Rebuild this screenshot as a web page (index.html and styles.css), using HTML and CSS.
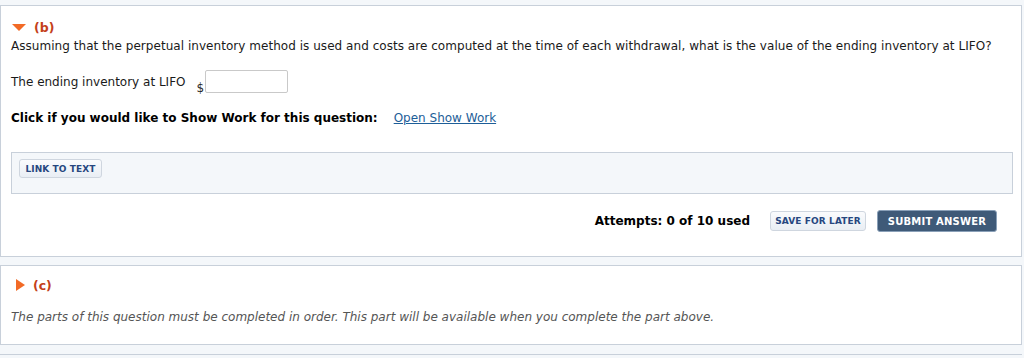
FILE: index.html
```html
<!DOCTYPE html>
<html>
<head>
<meta charset="utf-8">
<link rel="stylesheet" href="styles.css">
</head>
<body>
<div class="page">
  <section class="part">
    <h3 class="part-title"><span class="tri-down"></span>(b)</h3>
    <p class="question">Assuming that the perpetual inventory method is used and costs are computed at the time of each withdrawal, what is the value of the ending inventory at LIFO?</p>
    <div class="answer-row">
      <span class="answer-label">The ending inventory at LIFO</span>
      <span class="dollar">$</span>
      <span class="input"></span>
    </div>
    <div class="showwork">
      <span class="sw-label">Click if you would like to Show Work for this question:</span>
      <a class="sw-link">Open Show Work</a>
    </div>
    <div class="linkbox">
      <span class="btn-light btn-link">LINK TO TEXT</span>
    </div>
    <div class="actions">
      <span class="attempts">Attempts: 0 of 10 used</span>
      <span class="btn-light btn-save">SAVE FOR LATER</span>
      <span class="btn-submit">SUBMIT ANSWER</span>
    </div>
  </section>
  <section class="part part-c">
    <h3 class="part-title"><span class="tri-right"></span>(c)</h3>
    <p class="locked">The parts of this question must be completed in order. This part will be available when you complete the part above.</p>
  </section>
  <div class="next-line"></div>
</div>
</body>
</html>
```

FILE: styles.css
```css
html, body {
  margin: 0;
  padding: 0;
  background: #f4f7fa;
}
body {
  font-family: "DejaVu Sans", Verdana, sans-serif;
  font-size: 12px;
  color: #1a1a1a;
}
.page {
  padding-top: 5px;
  width: 1023px;
}
.part {
  background: #fff;
  border: 1px solid #c8d0da;
  box-sizing: border-box;
  width: 1022px;
}
.part:first-child {
  height: 252px;
  padding: 14px 10px 0 10px;
}
.part-c {
  margin-top: 8px;
  height: 80px;
  padding: 12px 10px 0 10px;
}
.part-title {
  margin: 0;
  display: flex;
  align-items: center;
  font-size: 12.5px;
  font-weight: bold;
  color: #c4401a;
  height: 14px;
}
.tri-down {
  width: 0;
  height: 0;
  border-left: 7px solid transparent;
  border-right: 7px solid transparent;
  border-top: 7px solid #f26a26;
  margin-left: 1px;
  margin-right: 8px;
  margin-top: 1px;
}
.tri-right {
  width: 0;
  height: 0;
  border-top: 6.5px solid transparent;
  border-bottom: 6.5px solid transparent;
  border-left: 9px solid #f26a26;
  margin-left: 5px;
  margin-right: 8px;
}
.question {
  margin: 4px 0 0 0;
  line-height: 16px;
  letter-spacing: 0.04px;
}
.answer-row {
  display: flex;
  align-items: flex-start;
  margin-top: 16px;
  height: 26px;
}
.answer-label {
  line-height: 16px;
  margin-top: 4px;
}
.dollar {
  margin-left: 11px;
  margin-top: 11px;
  line-height: 14px;
  color: #2a2a2a;
}
.input {
  display: inline-block;
  width: 83px;
  height: 23px;
  border: 1px solid #c9c9c9;
  border-radius: 2px;
  box-sizing: border-box;
  margin-left: 1px;
  background: #fff;
}
.showwork {
  display: flex;
  align-items: center;
  margin-top: 14px;
  height: 16px;
}
.sw-label {
  font-weight: bold;
  color: #000;
}
.sw-link {
  margin-left: 16px;
  color: #1d5e98;
  text-decoration: underline;
}
.linkbox {
  margin-top: 26px;
  height: 42px;
  border: 1px solid #c8d0da;
  background: #f4f7fa;
  box-sizing: border-box;
  width: 1002px;
  padding: 6px 0 0 7px;
}
.btn-light {
  display: inline-flex;
  align-items: center;
  justify-content: center;
  height: 19px;
  box-sizing: border-box;
  border: 1px solid #cfd6df;
  border-radius: 3px;
  background: linear-gradient(#fafbfd, #e9eef4);
  color: #27477f;
  font-size: 9px;
  font-weight: bold;
  letter-spacing: 0.1px;
}
.btn-link {
  width: 83px;
}
.actions {
  display: flex;
  align-items: center;
  justify-content: flex-end;
  margin-top: 16px;
  padding-right: 14px;
  height: 22px;
}
.attempts {
  font-weight: bold;
  font-size: 12px;
  color: #000;
  margin-right: 20px;
}
.btn-save {
  width: 96px;
  height: 20px;
  margin-right: 11px;
}
.btn-submit {
  display: inline-flex;
  align-items: center;
  justify-content: center;
  width: 120px;
  height: 22px;
  box-sizing: border-box;
  background: #3f5a78;
  border: 1px solid #8aa0b8;
  border-radius: 3px;
  color: #fff;
  font-size: 10px;
  font-weight: bold;
  letter-spacing: 0.2px;
}
.locked {
  margin: 17px 0 0 0;
  font-style: italic;
  color: #555;
  line-height: 16px;
}
.next-line {
  margin-top: 9px;
  border-top: 1px solid #c8d0da;
  width: 1022px;
}
```
